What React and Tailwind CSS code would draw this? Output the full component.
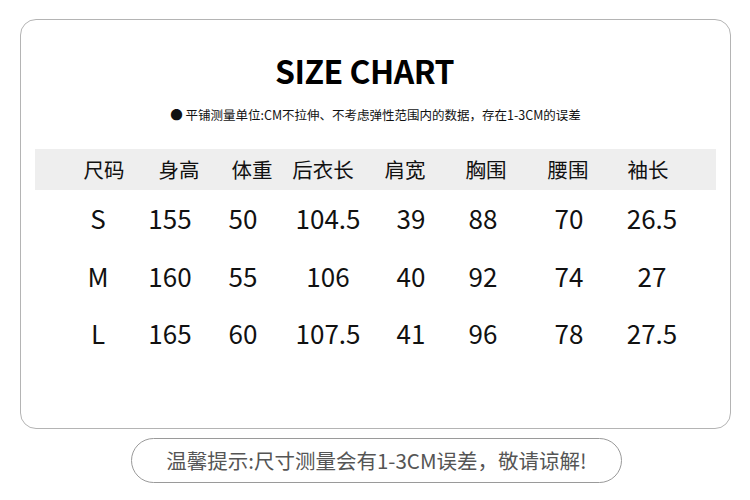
const headers = ["尺码", "身高", "体重", "后衣长", "肩宽", "胸围", "腰围", "袖长"];

const rows = [
  ["S", "155", "50", "104.5", "39", "88", "70", "26.5"],
  ["M", "160", "55", "106", "40", "92", "74", "27"],
  ["L", "165", "60", "107.5", "41", "96", "78", "27.5"],
];

function App() {
  return (
    <div
      className="w-[750px] h-[500px] bg-white pt-[19px] text-[#111]"
      style={{ fontFamily: '"Noto Sans CJK SC", "Noto Sans", sans-serif' }}
    >
      <div className="ml-[20px] w-[711px] h-[410px] border border-[#b4b4b4] rounded-[16px] pt-[34px]">
        <h1 className="pr-[22px] text-center text-[32px] leading-none font-bold tracking-[-0.5px] text-black">SIZE CHART</h1>
        <p className="mt-[23px] text-center text-[12.5px] leading-none">● 平铺测量单位:CM不拉伸、不考虑弹性范围内的数据，存在1-3CM的误差</p>

        <div className="mt-[27px] mx-[14px] h-[41px] bg-[#eeeeee] grid grid-cols-[70px_80px_66px_76px_88px_74px_90px_70px] items-center pl-[34px] text-[20.5px] leading-none">
          {headers.map((h) => (
            <div key={h} className="text-center">{h}</div>
          ))}
        </div>

        <div className="mx-[14px]">
          {rows.map((r) => (
            <div
              key={r[0]}
              className="h-[57.5px] grid grid-cols-[70px_74px_72px_98px_68px_76px_96px_70px] items-center pl-[28px] text-[26px] leading-none"
            >
              {r.map((v, i) => (
                <div key={i} className="text-center">{v}</div>
              ))}
            </div>
          ))}
        </div>
      </div>

      <div className="mt-[9px] ml-[131px] w-[491px] h-[45px] border border-[#9a9a9a] rounded-full flex items-center justify-center text-[20.5px] leading-none text-[#555]">
        温馨提示:尺寸测量会有1-3CM误差，敬请谅解!
      </div>
    </div>
  );
}

export default App;
